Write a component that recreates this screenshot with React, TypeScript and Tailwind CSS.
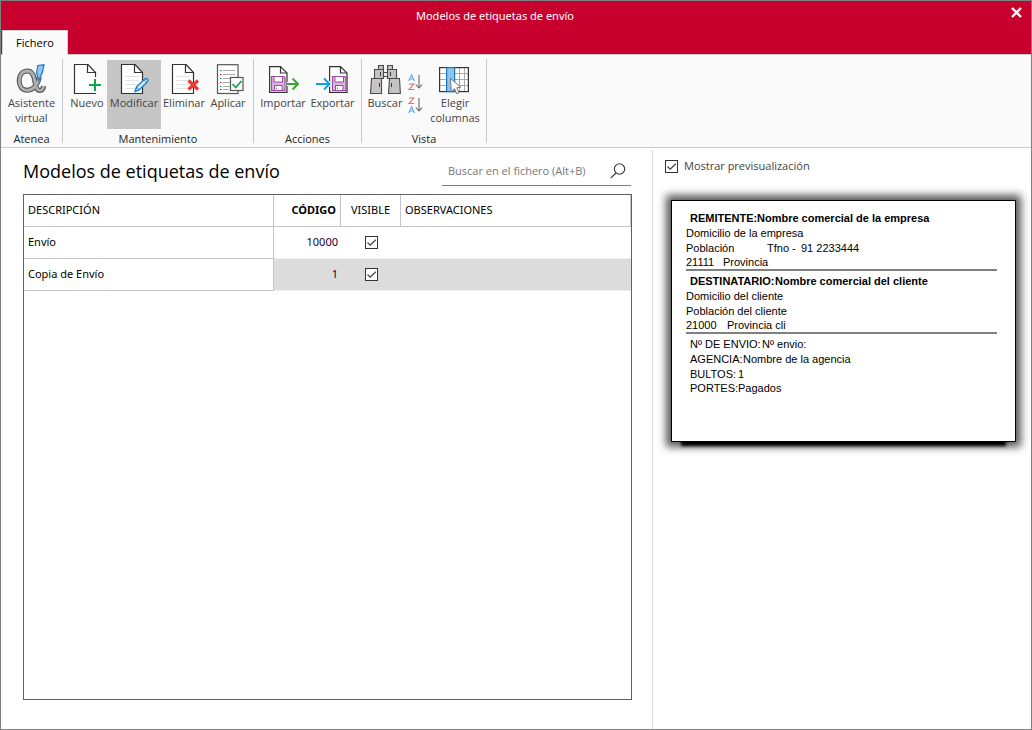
import React, { useState } from "react";

interface ShippingLabel {
  id: number;
  description: string;
  code: string;
  visible: boolean;
  notes: string;
}

const initialLabels: ShippingLabel[] = [
  { id: 1, description: "Envío", code: "10000", visible: true, notes: "" },
  { id: 2, description: "Copia de Envío", code: "1", visible: true, notes: "" },
];

/* Icons */

const Page = ({ x = 3, lines = false }: { x?: number; lines?: boolean }) => (
  <g transform={`translate(${x} 0)`}>
    <path d="M.5 .5H14L21.5 8.5V29.5H.5V.5Z" fill="#fff" stroke="#333" strokeWidth="1.2" />
    <path d="M13.5 .5V8.5H21.5" fill="none" stroke="#333" strokeWidth="1.2" />
    {lines && (
      <path d="M4 12.5H18M4 16.5H18M4 20.5H18M4 24.5H18" stroke="#e2e2e2" strokeWidth="1" />
    )}
  </g>
);

const ALPHA_STROKE =
  "M23.5 13C22 20 17.5 26.3 11 26.3C6 26.3 3.2 22 3.2 16.8C3.2 11 6.5 7 11.3 7C17 7 18.2 13 19.3 19.5C20 24 21.2 26.4 23.8 26.4C26.2 26.4 27.4 24.6 27.6 22";

const AssistantIcon = () => (
  <svg width="32" height="32" viewBox="0 0 32 32">
    <path d={ALPHA_STROKE} fill="none" stroke="#555" strokeWidth="5" />
    <path d={ALPHA_STROKE} fill="none" stroke="#b0b0b0" strokeWidth="2.8" />
    <path d="M21.8 1.5L28 .8L26.5 8L22.8 16.5L20.5 9Z" fill="#8fc6f1" stroke="#1f78c1" strokeWidth="1.2" />
  </svg>
);

const NewIcon = () => (
  <svg width="32" height="32" viewBox="0 0 32 32">
    <Page />
    <path d="M24 13V29M16 21H32" stroke="#fafafa" strokeWidth="5" />
    <path d="M24 15V27M18 21H30" stroke="#0fa64b" strokeWidth="2" />
  </svg>
);

const EditIcon = () => (
  <svg width="32" height="32" viewBox="0 0 32 32">
    <Page lines />
    <path
      d="M17 27.5L18.5 23L27 14.8Q28.5 14 29.5 15.3Q30.5 16.7 29.2 18L21 26Z"
      fill="#d8ecfa"
      stroke="#1e82c8"
      strokeWidth="1.4"
    />
    <path d="M26 15.8L28.5 18.4M18.5 23L21 25.8" stroke="#1e82c8" strokeWidth="1" />
  </svg>
);

const DeleteIcon = () => (
  <svg width="32" height="32" viewBox="0 0 32 32">
    <Page x={4} lines />
    <path d="M20.5 16.5L30 25.5M30 16.5L20.5 25.5" stroke="#ec3a36" strokeWidth="3.2" />
  </svg>
);

const ApplyIcon = () => (
  <svg width="34" height="32" viewBox="0 0 34 32">
    <rect x="6.5" y=".7" width="20.5" height="28.8" fill="#fff" stroke="#555" strokeWidth="1.2" />
    <path
      d="M12 6.5H24M12 10.5H24M12 14.5H24M12 18.5H24M12 22.5H24M12 25.5H18"
      stroke="#aaa"
      strokeWidth="1"
    />
    <path d="M9 6.5H10.5M9 14.5H10.5M9 22.5H10.5" stroke="#0b8a42" strokeWidth="1.2" />
    <path d="M9 10.5H10.5M9 18.5H10.5M9 25.5H10.5" stroke="#c8002d" strokeWidth="1.2" />
    <rect x="19.5" y="13.5" width="12.5" height="13" fill="#fff" stroke="#555" strokeWidth="1.2" />
    <path d="M21.5 20L24.7 23.5L30.5 17" fill="none" stroke="#12a650" strokeWidth="1.8" />
  </svg>
);

const Diskette = ({ x, y }: { x: number; y: number }) => (
  <g transform={`translate(${x} ${y})`}>
    <path d="M.5 .5H13L14 1.5V14.5H.5Z" fill="#dcb6de" stroke="#9b4fa3" strokeWidth="1.2" />
    <rect x="3" y=".5" width="8.5" height="5.5" fill="#fff" stroke="#9b4fa3" strokeWidth="1" />
    <rect x="3.5" y="9.5" width="7.5" height="5" fill="#fff" stroke="#9b4fa3" strokeWidth="1" />
    <path d="M5.5 11.5V13" stroke="#9b4fa3" strokeWidth="1" />
  </g>
);

const SmallPage = ({ x }: { x: number }) => (
  <g transform={`translate(${x} 2)`}>
    <path d="M.6 .6H11.5L18 7V26.4H.6Z" fill="#fff" stroke="#333" strokeWidth="1.2" />
    <path d="M11.5 .6V7H18" fill="none" stroke="#333" strokeWidth="1.2" />
  </g>
);

const ImportIcon = () => (
  <svg width="32" height="32" viewBox="0 0 32 32">
    <SmallPage x={2} />
    <Diskette x={4} y={12} />
    <path d="M20 20H30.5M25.5 14.5L31 20L25.5 25.5" fill="none" stroke="#fafafa" strokeWidth="4" />
    <path d="M20 20H30.5M25.5 14.5L31 20L25.5 25.5" fill="none" stroke="#3fa535" strokeWidth="2" />
  </svg>
);

const ExportIcon = () => (
  <svg width="35" height="32" viewBox="0 0 35 32">
    <SmallPage x={14} />
    <Diskette x={17} y={12} />
    <path d="M1 20H14M9 14.5L14.5 20L9 25.5" fill="none" stroke="#fafafa" strokeWidth="4" />
    <path d="M1 20H14M9 14.5L14.5 20L9 25.5" fill="none" stroke="#0fa0e0" strokeWidth="2" />
  </svg>
);

const BinocularsIcon = () => (
  <svg width="32" height="32" viewBox="0 0 32 32">
    <g fill="#c6c4c1" stroke="#4a4a4a" strokeWidth="1.1">
      <path d="M9.5 1.5H14.5V5.5H9.5Z" />
      <path d="M18.5 1.5H23.5V5.5H18.5Z" />
      <path d="M14.5 8.5H18.5V12.5H14.5Z" fill="#fafafa" />
      <path d="M5.5 5.5H14.5V14.5H5.5Z" />
      <path d="M18.5 5.5H27.5V14.5H18.5Z" />
      <path d="M2.5 14.5H12.5V29.5H1.5Z" />
      <path d="M20.5 14.5H30.5L31.4 29.5H19.5Z" />
    </g>
    <path d="M11.5 8V12M21.5 8V12M10.5 19V23M22.5 19V23" stroke="#333" strokeWidth="1" />
  </svg>
);

const SortIcon = ({ descending = false }: { descending?: boolean }) => {
  const a = descending ? 9 : 0;
  const z = descending ? 0 : 9;
  return (
    <svg width="16" height="17" viewBox="0 0 16 17">
      <g transform={`translate(0 ${a})`}>
        <path d="M.7 7L3.6 .8L6.5 7M1.8 5H5.4" fill="none" stroke="#5aaae0" strokeWidth="1.1" />
      </g>
      <g transform={`translate(0 ${z})`}>
        <path d="M1 1H5.8L1 6.5H6.2" fill="none" stroke="#ee6666" strokeWidth="1.1" />
      </g>
      <path d="M11 1V14M7.8 10.5L11 14L14.2 10.5" fill="none" stroke="#666" strokeWidth="1.1" />
    </svg>
  );
};

const ColumnsIcon = () => (
  <svg width="32" height="32" viewBox="0 0 32 32">
    <rect x=".6" y="3.6" width="28.8" height="24" fill="#fff" />
    <path d="M1 9.5H30M1 15.5H30M1 21.5H30M20.5 4V27M25.5 4V27" stroke="#aaa" strokeWidth="1" />
    <rect x=".6" y="3.6" width="28.8" height="24" fill="none" stroke="#333" strokeWidth="1.2" />
    <rect x="7.6" y="3.6" width="8" height="24" fill="#8cc6f0" stroke="#1b75bc" strokeWidth="1.2" />
    <path
      d="M11.5 14.5L21.8 23.2L17.8 23.8L20 28.8L17.8 29.8L15.5 24.8L12.2 27.5Z"
      fill="#fff"
      stroke="#777"
      strokeWidth="1"
    />
  </svg>
);

/* Controls */

interface RibbonButtonProps {
  label: string;
  icon: React.ReactNode;
  className: string;
  active?: boolean;
}

const RibbonButton = ({ label, icon, className, active = false }: RibbonButtonProps) => (
  <button
    type="button"
    className={`flex h-[69px] shrink-0 flex-col items-center pt-1 text-[11px] leading-[15px] text-[#444] ${
      active ? "bg-[#c5c5c5]" : "hover:bg-[#e5e5e5]"
    } ${className}`}
  >
    {icon}
    <span className="-mt-px">{label}</span>
  </button>
);

const RibbonGroup = ({ title, children }: { title: string; children: React.ReactNode }) => (
  <section
    aria-label={title}
    className="flex shrink-0 flex-col items-center border-r border-[#c8c8c8] px-1"
  >
    <div className="flex pt-px">{children}</div>
    <div className="pt-0.5 text-[11px] leading-[15px] text-[#222]">{title}</div>
  </section>
);

interface CheckboxProps {
  id: string;
  label: string;
  checked: boolean;
  onChange: () => void;
  hideLabel?: boolean;
}

const Checkbox = ({ id, label, checked, onChange, hideLabel = false }: CheckboxProps) => (
  <span className="inline-flex items-center gap-1.5">
    <span className="inline-grid">
      <input
        id={id}
        type="checkbox"
        checked={checked}
        onChange={onChange}
        aria-label={hideLabel ? label : undefined}
        className="col-start-1 row-start-1 size-[13px] appearance-none border border-[#333] bg-white"
      />
      {checked && (
        <svg
          width="13"
          height="13"
          viewBox="0 0 13 13"
          className="pointer-events-none col-start-1 row-start-1"
        >
          <path d="M2.5 6.5L5.2 9.2L10.8 3.8" fill="none" stroke="#444" strokeWidth="1.3" />
        </svg>
      )}
    </span>
    {!hideLabel && (
      <label htmlFor={id} className="text-[11px] leading-4 text-[#444]">
        {label}
      </label>
    )}
  </span>
);

const LabelPreview = () => (
  <div className="mt-[26px] mr-[15px] ml-[18px] min-h-[242px] border border-black bg-white pt-2.5 pr-[18px] pl-3.5 font-['Liberation_Sans',Arial,sans-serif] text-[11px] leading-[15px] text-black shadow-[0_0_8px_5px_rgba(0,0,0,0.65),0_14px_3px_-10px_#000]">
    <div className="border-b-2 border-[#808080]">
      <p className="flex pl-1 font-bold">
        <span className="w-[67px]">REMITENTE:</span>
        <span>Nombre comercial de la empresa</span>
      </p>
      <p>Domicilio de la empresa</p>
      <p className="flex">
        <span className="w-[81px]">Población</span>
        <span className="w-[34px]">Tfno -</span>
        <span>91 2233444</span>
      </p>
      <p className="flex leading-[13px]">
        <span className="w-[37px]">21111</span>
        <span>Provincia</span>
      </p>
    </div>
    <div className="border-b-2 border-[#808080] pt-[3px]">
      <p className="flex pl-1 font-bold">
        <span className="w-[85px]">DESTINATARIO:</span>
        <span>Nombre comercial del cliente</span>
      </p>
      <p>Domicilio del cliente</p>
      <p>Población del cliente</p>
      <p className="flex leading-[13px]">
        <span className="w-[41px]">21000</span>
        <span>Provincia cli</span>
      </p>
    </div>
    <div className="pt-[3px] pl-1 whitespace-nowrap">
      <p className="flex">
        <span className="w-[72px]">Nº DE ENVIO:</span>
        <span>Nº envio:</span>
      </p>
      <p className="flex">
        <span className="w-[53px]">AGENCIA:</span>
        <span>Nombre de la agencia</span>
      </p>
      <p className="flex leading-[14px]">
        <span className="w-12">BULTOS:</span>
        <span>1</span>
      </p>
      <p className="flex">
        <span className="w-12">PORTES:</span>
        <span>Pagados</span>
      </p>
    </div>
  </div>
);

export default function App() {
  const [labels, setLabels] = useState<ShippingLabel[]>(initialLabels);
  const [selectedId, setSelectedId] = useState(2);
  const [search, setSearch] = useState("");
  const [showPreview, setShowPreview] = useState(true);

  const toggleVisible = (id: number) => {
    setLabels(labels.map((l) => (l.id === id ? { ...l, visible: !l.visible } : l)));
  };

  const rows = labels.filter((l) =>
    l.description.toLowerCase().includes(search.toLowerCase())
  );

  return (
    <div className="flex min-h-screen flex-col border border-[#808080] bg-white font-['Open_Sans','Noto_Sans',sans-serif] text-black">
      {/* Title bar */}
      <header className="border-b border-[#c8c8c8] bg-[#c8002d]">
        <div className="flex h-[29px]">
          <h2 className="flex-1 text-center font-['Noto_Sans',sans-serif] text-[11px] leading-[29px] text-white">
            Modelos de etiquetas de envío
          </h2>
          <button type="button" aria-label="Cerrar" className="flex w-[42px] justify-center pt-1.5 pl-3">
            <svg width="11" height="11" viewBox="0 0 11 11">
              <path d="M1 1L10 10M10 1L1 10" stroke="#fff" strokeWidth="2.4" />
            </svg>
          </button>
        </div>
        <nav className="flex pl-px">
          <button
            type="button"
            className="-mb-px h-[25px] w-[66px] border border-b-0 border-[#d0d0d0] bg-[#fafafa] text-[11px] leading-6 text-black"
          >
            Fichero
          </button>
        </nav>
      </header>

      {/* Ribbon */}
      <div className="flex h-[93px] border-b border-[#c8c8c8] bg-[#fafafa] pt-1 pb-1">
        <RibbonGroup title="Atenea">
          <RibbonButton label="Asistente virtual" icon={<AssistantIcon />} className="w-[53px]" />
        </RibbonGroup>
        <RibbonGroup title="Mantenimiento">
          <RibbonButton label="Nuevo" icon={<NewIcon />} className="w-10" />
          <RibbonButton label="Modificar" icon={<EditIcon />} className="w-[54px]" active />
          <RibbonButton label="Eliminar" icon={<DeleteIcon />} className="w-[46px]" />
          <RibbonButton label="Aplicar" icon={<ApplyIcon />} className="w-[42px]" />
        </RibbonGroup>
        <RibbonGroup title="Acciones">
          <RibbonButton label="Importar" icon={<ImportIcon />} className="w-[50px]" />
          <RibbonButton label="Exportar" icon={<ExportIcon />} className="w-[49px]" />
        </RibbonGroup>
        <RibbonGroup title="Vista">
          <RibbonButton label="Buscar" icon={<BinocularsIcon />} className="w-[38px]" />
          <div className="flex w-6 flex-col items-center gap-1.5 pt-3.5">
            <button type="button" aria-label="Orden ascendente">
              <SortIcon />
            </button>
            <button type="button" aria-label="Orden descendente">
              <SortIcon descending />
            </button>
          </div>
          <RibbonButton label="Elegir columnas" icon={<ColumnsIcon />} className="w-[54px]" />
        </RibbonGroup>
      </div>

      <div className="flex flex-1 pt-0.5">
        {/* File list */}
        <main className="flex flex-1 flex-col pr-5 pb-[29px] pl-[22px]">
          <div className="flex h-11 items-start justify-between pr-px">
            <h1 className="text-[18px] leading-[42px]">Modelos de etiquetas de envío</h1>
            <div className="mt-2 flex h-7 w-[189px] items-center border-b border-[#808080] pr-[5px] pb-0.5 pl-1.5">
              <input
                type="text"
                aria-label="Buscar en el fichero"
                placeholder="Buscar en el fichero (Alt+B)"
                value={search}
                onChange={(e) => setSearch(e.target.value)}
                className="min-w-0 flex-1 text-[11px] leading-4 outline-none placeholder:text-[#777]"
              />
              <button type="button" aria-label="Buscar">
                <svg width="16" height="16" viewBox="0 0 16 16">
                  <circle cx="9.5" cy="6" r="5.2" fill="none" stroke="#333" strokeWidth="1.1" />
                  <path d="M6 10L.7 15.2" stroke="#333" strokeWidth="1.1" />
                </svg>
              </button>
            </div>
          </div>

          <div className="flex-1 border border-[#606060]">
            <table className="w-full table-fixed border-separate border-spacing-0 font-['Noto_Sans',sans-serif] text-[11px]">
              <thead>
                <tr className="h-8">
                  <th className="w-[250px] border-r border-b border-[#c5c5c5] px-1 text-left font-normal">
                    DESCRIPCIÓN
                  </th>
                  <th className="w-[67px] border-r border-b border-[#c5c5c5] px-1 text-right font-bold">
                    CÓDIGO
                  </th>
                  <th className="w-[60px] border-r border-b border-[#c5c5c5] text-center font-normal">
                    VISIBLE
                  </th>
                  <th className="border-r border-b border-[#c5c5c5] px-1 text-left font-normal">
                    OBSERVACIONES
                  </th>
                </tr>
              </thead>
              <tbody>
                {rows.map((label) => (
                  <tr
                    key={label.id}
                    onClick={() => setSelectedId(label.id)}
                    className={`h-8 ${label.id === selectedId ? "bg-[#dcdcdc]" : "bg-white"}`}
                  >
                    <td className="border-r border-b border-[#c5c5c5] bg-white px-1">
                      {label.description}
                    </td>
                    <td className="border-b border-[#eee] pr-[3px] text-right text-[#200030]">
                      {label.code}
                    </td>
                    <td className="border-b border-[#eee] text-center">
                      <span className="flex justify-center">
                        <Checkbox
                          id={`visible-${label.id}`}
                          label={`Visible: ${label.description}`}
                          checked={label.visible}
                          onChange={() => toggleVisible(label.id)}
                          hideLabel
                        />
                      </span>
                    </td>
                    <td className="border-b border-[#eee] px-1">{label.notes}</td>
                  </tr>
                ))}
              </tbody>
            </table>
          </div>
        </main>

        {/* Preview */}
        <aside className="w-[379px] shrink-0 border-l border-[#d9d9d9] pt-2">
          <div className="flex pl-3">
            <Checkbox
              id="show-preview"
              label="Mostrar previsualización"
              checked={showPreview}
              onChange={() => setShowPreview(!showPreview)}
            />
          </div>
          {showPreview && <LabelPreview />}
        </aside>
      </div>
    </div>
  );
}
